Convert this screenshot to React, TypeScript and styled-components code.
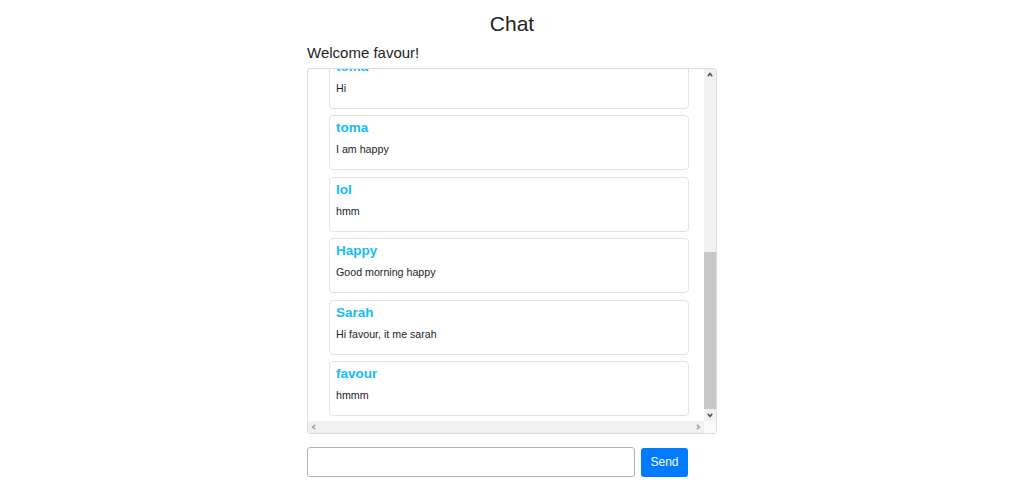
import React from "react";
import styled, { createGlobalStyle } from "styled-components";

const Global = createGlobalStyle`
  html, body { margin: 0; padding: 0; background: #fff; }
  body { font-family: "Liberation Sans", Arial, sans-serif; color: #212529; }
  * { box-sizing: border-box; }
`;

const Page = styled.div`
  width: 410px;
  margin: 0 auto;
  padding-top: 12px;
  display: flex;
  flex-direction: column;
`;

const Title = styled.h1`
  margin: 0;
  font-size: 21px;
  font-weight: 400;
  text-align: center;
  line-height: 24px;
`;

const Welcome = styled.h2`
  margin: 8px 0 0;
  font-size: 15px;
  font-weight: 400;
  line-height: 17px;
`;

const MessageBox = styled.div`
  margin-top: 7px;
  height: 366px;
  border: 1px solid #dcdcdc;
  border-radius: 3px;
  overflow: hidden;
  display: grid;
  grid-template-columns: 1fr 12px;
  grid-template-rows: 1fr 12px;
`;

const Viewport = styled.div`
  overflow: hidden;
  display: flex;
  flex-direction: column;
  justify-content: flex-end;
  min-height: 0;
`;

const List = styled.ul`
  list-style: none;
  margin: 0;
  padding: 0 15px 5px 21px;
  display: flex;
  flex-direction: column;
  gap: 6.5px;
  flex: none;
`;

const Card = styled.li`
  border: 1px solid #e2e2e2;
  border-radius: 4px;
  padding: 4px 6px 14px;
  height: 55px;
  flex: none;
`;

const Name = styled.div`
  font-size: 13.5px;
  font-weight: 700;
  line-height: 16px;
  color: #10bdf8;
`;

const Text = styled.p`
  margin: 7px 0 0;
  font-size: 10.67px;
  line-height: 12px;
  color: #212529;
`;

const VBar = styled.div`
  background: #f1f1f1;
  display: flex;
  flex-direction: column;
`;

const HBar = styled.div`
  background: #f1f1f1;
  display: flex;
  flex-direction: row;
`;

const Corner = styled.div`
  background: #fafafa;
`;

const ArrowButton = styled.div`
  width: 12px;
  height: 12px;
  flex: none;
  display: flex;
  align-items: center;
  justify-content: center;
`;

const Track = styled.div<{ $vertical?: boolean }>`
  flex: 1;
  display: flex;
  flex-direction: ${(p) => (p.$vertical ? "column" : "row")};
  justify-content: flex-end;
`;

const Thumb = styled.div`
  background: #c8c8c8;
  height: 157px;
  flex: none;
`;

const Form = styled.form`
  margin-top: 13px;
  display: flex;
  align-items: center;
  gap: 6px;
`;

const Input = styled.input`
  width: 328px;
  height: 30px;
  border: 1px solid #b3b3b3;
  border-radius: 3px;
  padding: 0 6px;
  font-family: inherit;
  font-size: 12px;
  outline: none;
`;

const SendButton = styled.button`
  width: 47px;
  height: 29px;
  border: none;
  border-radius: 3px;
  background: #007bff;
  color: #fff;
  font-family: "Liberation Sans", Arial, sans-serif;
  font-size: 12px;
  padding: 0;
  cursor: pointer;
`;

type Dir = "up" | "down" | "left" | "right";
const chevrons: Record<Dir, string> = {
  up: "0.8,4.2 3,1.6 5.2,4.2",
  down: "0.8,1.8 3,4.4 5.2,1.8",
  left: "4.2,0.8 1.6,3 4.2,5.2",
  right: "1.8,0.8 4.4,3 1.8,5.2",
};

function Arrow({ dir, color }: { dir: Dir; color: string }) {
  return (
    <ArrowButton>
      <svg width="6" height="6" viewBox="0 0 6 6">
        <polyline
          points={chevrons[dir]}
          fill="none"
          stroke={color}
          strokeWidth="1.6"
          strokeLinejoin="miter"
        />
      </svg>
    </ArrowButton>
  );
}

const messages = [
  { name: "favour", text: "Hello everyone" },
  { name: "lol", text: "hey" },
  { name: "Sarah", text: "Hello" },
  { name: "Happy", text: "hi guys" },
  { name: "toma", text: "good morning" },
  { name: "favour", text: "how are you all" },
  { name: "toma", text: "Hi" },
  { name: "toma", text: "I am happy" },
  { name: "lol", text: "hmm" },
  { name: "Happy", text: "Good morning happy" },
  { name: "Sarah", text: "Hi favour, it me sarah" },
  { name: "favour", text: "hmmm" },
];

export default function App() {
  return (
    <>
      <Global />
      <Page>
        <Title>Chat</Title>
        <Welcome>Welcome favour!</Welcome>
        <MessageBox>
          <Viewport>
            <List>
              {messages.map((m, i) => (
                <Card key={i}>
                  <Name>{m.name}</Name>
                  <Text>{m.text}</Text>
                </Card>
              ))}
            </List>
          </Viewport>
          <VBar>
            <Arrow dir="up" color="#505050" />
            <Track $vertical>
              <Thumb />
            </Track>
            <Arrow dir="down" color="#505050" />
          </VBar>
          <HBar>
            <Arrow dir="left" color="#a3a3a3" />
            <Track />
            <Arrow dir="right" color="#a3a3a3" />
          </HBar>
          <Corner />
        </MessageBox>
        <Form onSubmit={(e) => e.preventDefault()}>
          <Input type="text" />
          <SendButton type="submit">Send</SendButton>
        </Form>
      </Page>
    </>
  );
}
